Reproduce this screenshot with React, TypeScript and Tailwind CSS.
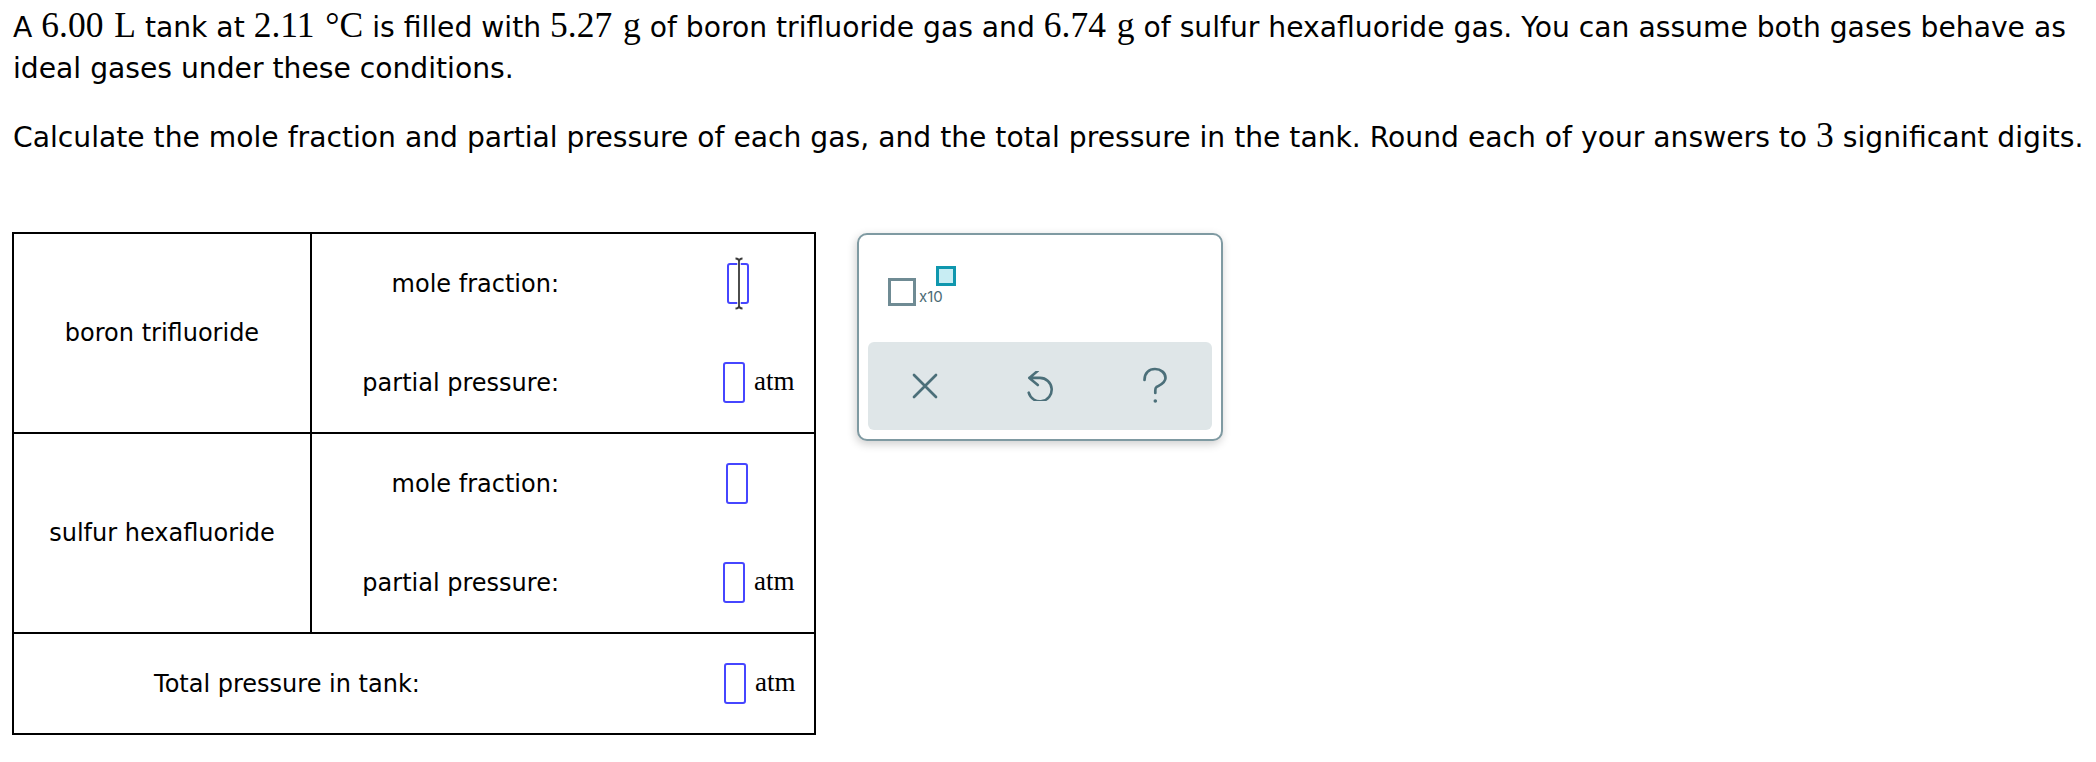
import React from 'react';

const sans = "font-['DejaVu_Sans',Verdana,sans-serif]";
const serif = "font-['Liberation_Serif','Times_New_Roman',serif]";

function M({ children }: { children: React.ReactNode }) {
  return <span className={`${serif} text-[35.5px] leading-none [word-spacing:2px]`}>{children}</span>;
}

function Blank({ cursor = false }: { cursor?: boolean }) {
  return (
    <span className="relative inline-block w-[22px] h-[41px] border-2 border-[#4646ff] rounded-[3px] bg-white">
      {cursor && (
        <svg
          className="absolute left-[5px] top-[-8px]"
          width="10"
          height="53"
          viewBox="0 0 10 53"
          fill="none"
        >
          <path
            d="M1.5 1.5C3.5 1.5 5 2.5 5 4.5C5 2.5 6.5 1.5 8.5 1.5M5 4.5V48.5M1.5 51.5C3.5 51.5 5 50.5 5 48.5C5 50.5 6.5 51.5 8.5 51.5"
            stroke="white"
            strokeWidth="3.5"
          />
          <path
            d="M1.5 1.5C3.5 1.5 5 2.5 5 4.5C5 2.5 6.5 1.5 8.5 1.5M5 4.5V48.5M1.5 51.5C3.5 51.5 5 50.5 5 48.5C5 50.5 6.5 51.5 8.5 51.5"
            stroke="#3a3a3a"
            strokeWidth="1.8"
          />
        </svg>
      )}
    </span>
  );
}

function Atm() {
  return <span className={`${serif} text-[27px] ml-[9px] -mt-[3px]`}>atm</span>;
}

function SubRow({ label, unit, cursor, boxLeft }: { label: string; unit?: boolean; cursor?: boolean; boxLeft: string }) {
  return (
    <div className="h-[99px] flex items-center">
      <div className="w-[247px] text-right text-[24px]">{label}</div>
      <div className={`flex items-center ${boxLeft}`}>
        <Blank cursor={cursor} />
        {unit && <Atm />}
      </div>
    </div>
  );
}

export default function App() {
  return (
    <div className={`${sans} bg-white text-black w-full min-h-screen pl-[13px] pt-[7px]`}>
      <p className="text-[28.2px] leading-[41px] whitespace-nowrap">
        A <M>6.00 L</M> tank at <M>2.11 °C</M> is filled with <M>5.27 g</M> of boron trifluoride gas and{' '}
        <M>6.74 g</M> of sulfur hexafluoride gas. You can assume both gases behave as
        <br />
        ideal gases under these conditions.
      </p>
      <p className="mt-[28px] text-[28.2px] leading-[41px] whitespace-nowrap">
        Calculate the mole fraction and partial pressure of each gas, and the total pressure in the tank. Round each of
        your answers to <M>3</M> significant digits.
      </p>

      <div className="mt-[74px] -ml-[1px] flex items-start">
        <div className="w-[804px] border-2 border-black text-[24px]">
          <div className="flex h-[198px]">
            <div className="w-[298px] flex items-center justify-center border-r-2 border-black">boron trifluoride</div>
            <div className="flex-1">
              <SubRow label="mole fraction:" cursor boxLeft="ml-[168px]" />
              <SubRow label="partial pressure:" unit boxLeft="ml-[164px]" />
            </div>
          </div>
          <div className="flex h-[200px] border-t-2 border-black">
            <div className="w-[298px] flex items-center justify-center border-r-2 border-black">sulfur hexafluoride</div>
            <div className="flex-1">
              <SubRow label="mole fraction:" boxLeft="ml-[167px]" />
              <SubRow label="partial pressure:" unit boxLeft="ml-[164px]" />
            </div>
          </div>
          <div className="flex items-center h-[101px] border-t-2 border-black">
            <div className="w-[546px] text-center">Total pressure in tank:</div>
            <div className="flex items-center ml-[164px]">
              <Blank />
              <Atm />
            </div>
          </div>
        </div>

        {/* answer tools */}
        <div className="ml-[41px] mt-[1px] w-[366px] h-[208px] border-2 border-[#7f9aa2] rounded-[10px] bg-white shadow-[-1px_3px_10px_rgba(0,0,0,0.2)] flex flex-col">
          <div className="h-[107px] pl-[29px] pt-[43px]">
            <div className="relative inline-flex items-end">
              <div className="w-[28px] h-[28px] border-[3px] border-[#6f8b94]" />
              <span className="ml-[3px] mb-[2px] font-['Inter',sans-serif] text-[15px] leading-none text-[#4b6b75]">
                x10
              </span>
              <div className="absolute left-[48px] top-[-12px] w-[20px] h-[20px] border-[3px] border-[#0f97ae] bg-[#c8edf3]" />
            </div>
          </div>
          <div className="mx-[9px] mb-[9px] flex-1 rounded-[6px] bg-[#dfe6e8] grid grid-cols-3 items-center justify-items-center text-[#4b6f79]">
            <svg width="26" height="26" viewBox="0 0 26 26" fill="none">
              <path d="M2 2L24 24M24 2L2 24" stroke="currentColor" strokeWidth="2.7" strokeLinecap="round" />
            </svg>
            <svg width="30" height="30" viewBox="6.7 9.7 30 30" fill="none">
              <path
                d="M11 16.6H21.7A11.7 11.7 0 1 1 10.4 31.4M19.5 9.5L11 16.6L19.5 23.7"
                stroke="currentColor"
                strokeWidth="2.6"
                strokeLinecap="round"
                strokeLinejoin="round"
              />
            </svg>
            <svg width="26" height="38" viewBox="0 0 26 38" fill="none">
              <path
                d="M2.5 13C2.5 6 7 2 13 2C19 2 23.5 6 23.5 11C23.5 16 18 18 14.5 20C13.5 20.7 13.3 22 13.3 23.5V26"
                stroke="currentColor"
                strokeWidth="2.7"
                strokeLinecap="round"
              />
              <circle cx="13.3" cy="34" r="1.8" fill="currentColor" />
            </svg>
          </div>
        </div>
      </div>
    </div>
  );
}
